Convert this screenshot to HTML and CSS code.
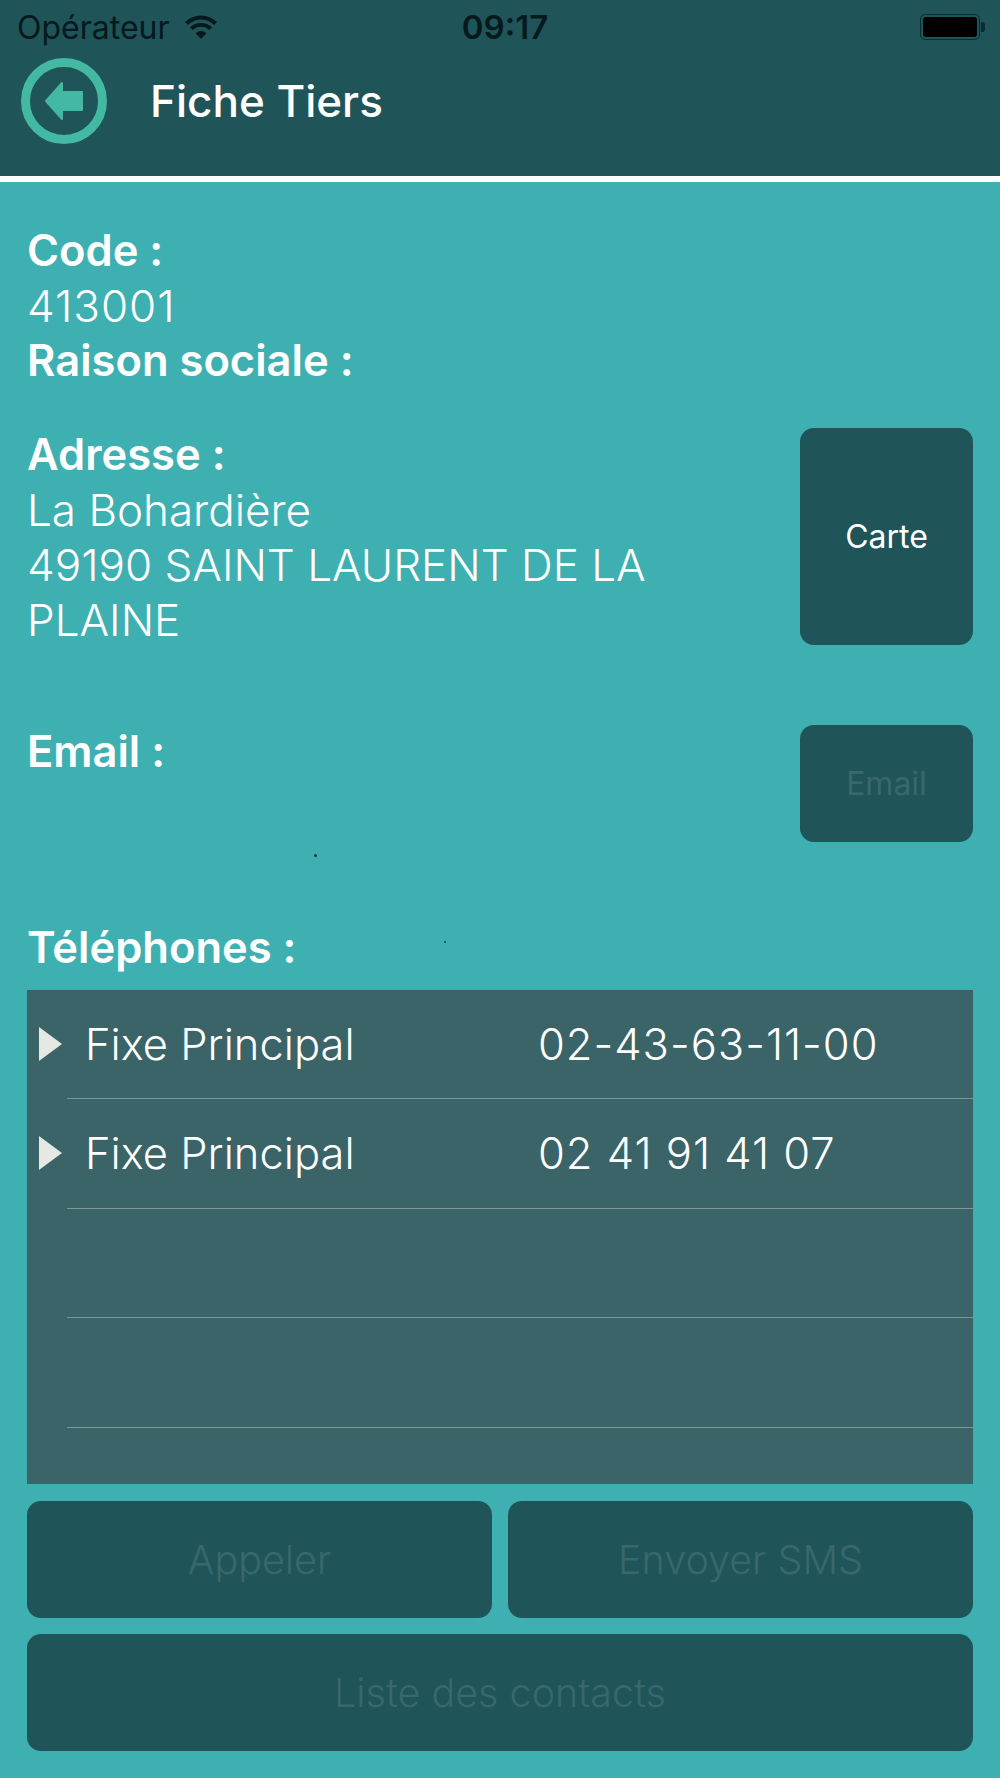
FILE: index.html
```html
<!DOCTYPE html>
<html lang="fr">
<head>
  <meta charset="UTF-8" />
  <meta name="viewport" content="width=device-width, initial-scale=1.0" />
  <title>Fiche Tiers</title>
  <link rel="stylesheet" href="styles.css">
</head>
<body>
  <header class="topbar">
    <div class="status">
      <div class="status-left">
        <span>Opérateur</span>
        <svg class="wifi" viewBox="0 0 32 24" width="32" height="24"><path d="M16 24 10.6 18.2a8 8 0 0 1 10.8 0Z"/><path d="M7.6 15.1 5 12.3a16 16 0 0 1 22 0l-2.6 2.8a12.2 12.2 0 0 0-16.8 0Z"/><path d="M2.8 9.9 0 7a23 23 0 0 1 32 0l-2.8 2.9a19 19 0 0 0-26.4 0Z"/></svg>
      </div>
      <b class="clock">09:17</b>
      <div class="battery"><i></i></div>
    </div>
    <div class="title-row">
      <svg class="back" viewBox="0 0 86 86" width="86" height="86"><circle cx="43" cy="43" r="38.5" fill="none" stroke="#43b8a2" stroke-width="9"/><path d="M25 43 41 25V34H61V52H41V61Z" fill="#43b8a2" stroke="#43b8a2" stroke-width="2" stroke-linejoin="round"/></svg>
      <h1>Fiche Tiers</h1>
    </div>
  </header>

  <main>
    <section class="block-code">
      <h2>Code :</h2>
      <p class="num">413001</p>
      <h2>Raison sociale :</h2>
    </section>

    <section class="row row-address">
      <div class="row-text">
        <h2>Adresse :</h2>
        <p>La Bohardière<br>49190 SAINT LAURENT DE LA PLAINE</p>
      </div>
      <button class="btn btn-map">Carte</button>
    </section>

    <section class="row row-email">
      <h2>Email :</h2>
      <button class="btn btn-small off">Email</button>
    </section>

    <h2 class="phones-title">Téléphones :</h2>
    <div class="phones">
      <div class="phone"><span class="tri"></span><span class="kind">Fixe Principal</span><span class="num">02-43-63-11-00</span></div>
      <div class="phone"><span class="tri"></span><span class="kind">Fixe Principal</span><span class="num">02 41 91 41 07</span></div>
      <div class="phone"></div>
      <div class="phone"></div>
    </div>

    <div class="actions">
      <button class="btn off">Appeler</button>
      <button class="btn off">Envoyer SMS</button>
      <button class="btn off wide">Liste des contacts</button>
    </div>
  </main>

  <span class="speck speck-a"></span>
  <span class="speck speck-b"></span>
</body>
</html>
```

FILE: styles.css
```css
:root{--teal:#3fb0b1;--dark:#1f5459;--panel:#3a6468;--off:#38686d;}
*{box-sizing:border-box;margin:0;padding:0}
html,body{height:100%}
body{position:relative;font-family:'Inter','Roboto',sans-serif;background:var(--teal);color:#fff;overflow:hidden}

.topbar{height:182px;background:var(--dark);border-bottom:6px solid #fff}
.status{height:54px;padding:0 20px 0 17px;display:grid;grid-template-columns:1fr auto 1fr;align-items:center;color:#06191c;font-size:32px}
.status-left{display:flex;align-items:center;gap:15px}
.wifi{fill:#06191c}
.clock{font-weight:600;font-size:33px;margin-left:13px}
.battery{justify-self:end;position:relative;width:60px;height:26px;padding:2px;border:1px solid #0d2b30;border-radius:5px}
.battery i{display:block;height:100%;background:#000;border-radius:3px}
.battery::after{content:'';position:absolute;right:-6px;top:7px;width:4px;height:10px;background:#0d2b30;border-radius:0 3px 3px 0}
.title-row{display:flex;align-items:center;gap:43px;padding:4px 0 0 21px}
h1{font-size:44px;font-weight:500}

main{padding:42px 27px 0 27px}
h2{font-size:43.5px;font-weight:600;line-height:53px;padding-bottom:2px}
p{font-size:44px;font-weight:300;line-height:55px}
.num{letter-spacing:1px}
.block-code{height:204px}
.row{display:flex;justify-content:space-between;align-items:flex-start}
.row-address{height:297px}
.row-text{width:640px}
.row-email{height:196px}
.phones-title{height:69px}

.phones{height:494px;background:var(--panel);overflow:hidden}
.phone{position:relative;height:109.4px;display:flex;align-items:center;padding:0 0 2px 58px;font-size:43.5px;font-weight:300}
.phone::after{content:'';position:absolute;left:40px;right:0;bottom:0;height:1px;background:#7f9496}
.tri{position:absolute;left:12px;top:37px;border-left:23px solid #e6e8e4;border-top:17px solid transparent;border-bottom:17px solid transparent}
.kind{width:453px}

.btn{font:inherit;font-size:32px;color:#fff;background:var(--dark);border:0;border-radius:14px;display:flex;align-items:center;justify-content:center}
.btn-map{width:173px;height:217px}
.btn-small{width:173px;height:117px}
.off{color:var(--off)}
.actions{margin-top:17px;display:grid;grid-template-columns:1fr 1fr;gap:16px}
.actions .btn{height:117px;font-size:39.5px;font-weight:300}
.wide{grid-column:1 / 3}

.speck{position:absolute;background:#123a40;border-radius:50%}
.speck-a{left:314px;top:854px;width:3px;height:3px}
.speck-b{left:444px;top:941px;width:2px;height:2px}
```
